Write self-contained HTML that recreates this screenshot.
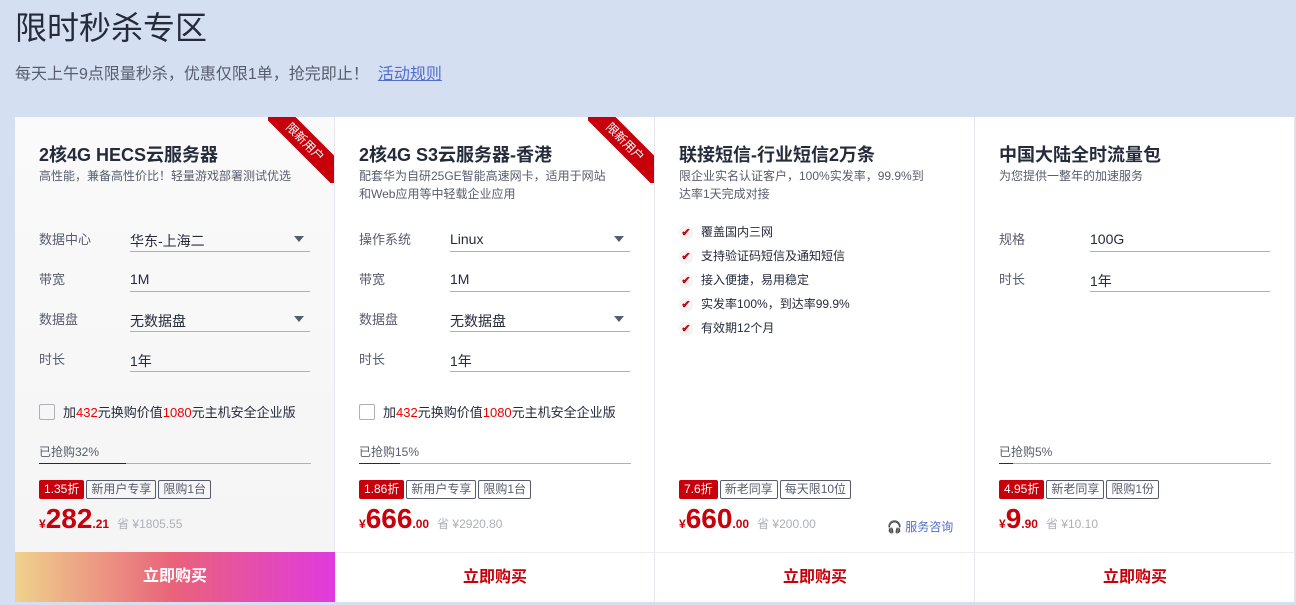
<!DOCTYPE html>
<html><head><meta charset="utf-8"><style>
*{margin:0;padding:0;box-sizing:border-box}
body{width:1296px;height:605px;background:#d4e0f1;font-family:"Liberation Sans","Noto Sans CJK SC",sans-serif;color:#252b3a;position:relative;overflow:hidden}
.a{position:absolute}
h1{position:absolute;left:15px;top:3px;font-size:32px;font-weight:normal;color:#252b3a}
.sub{left:15px;top:60px;font-size:16px;color:#575d6c}
.sub a{color:#526ecc;text-decoration:underline;margin-left:9px}
.card{position:absolute;top:117px;width:320px;height:485px;background:#fff;border-right:1px solid #e5e8ee}
.card .t{position:absolute;left:24px;top:24px;font-size:18px;font-weight:bold;color:#252b3a}
.card .d{position:absolute;left:24px;top:50px;font-size:12px;color:#575d6c;line-height:18px;width:250px}
.row{position:absolute;left:24px;width:271px;height:20px;font-size:13px}
.row .l{position:absolute;left:0;top:-2px;color:#575d6c}
.row .v{position:absolute;left:91px;top:0;width:180px;height:18px;border-bottom:1px solid #adb0b8;padding-bottom:20px;font-size:14px;color:#252b3a}
.tri{position:absolute;right:6px;top:5px;border:5px solid transparent;border-top:6px solid #575d6c}
.chk{position:absolute;left:24px;top:285px;font-size:13px;color:#252b3a}
.chk i{display:inline-block;width:16px;height:16px;border:1px solid #adb0b8;border-radius:2px;vertical-align:-3px;margin-right:8px}
.red{color:#e00}
.prog{position:absolute;left:24px;top:326px;font-size:12px;color:#575d6c}
.bar{position:absolute;left:24px;top:346px;width:272px;height:1px;background:#adb0b8}
.bar b{display:block;height:1px;background:#252b3a}
.tags{position:absolute;left:24px;top:363px;font-size:12px}
.tags span{display:inline-block;height:19px;line-height:17px;padding:0 4px;border:1px solid #575d6c;border-radius:2px;color:#575d6c;margin-right:2px}
.tags span.k{background:#c7000b;border-color:#c7000b;color:#fff}
.price{position:absolute;left:24px;top:386px;color:#c7000b;font-weight:bold;white-space:nowrap}
.price .y{font-size:12px}.price .n{font-size:28px}.price .c{font-size:12px}
.price .o{font-size:12px;color:#adb0b8;font-weight:normal;margin-left:8px}
.btn{position:absolute;left:0;top:435px;width:320px;height:50px;line-height:50px;text-align:center;font-size:16px;font-weight:bold;color:#c7000b;border-top:1px solid #eee}
.rib{position:absolute;right:0;top:0;width:66px;height:66px;overflow:hidden}
.rib div{position:absolute;right:-26px;top:14px;width:110px;height:22px;line-height:22px;background:#c7000b;color:#fff;font-size:12px;text-align:center;transform:rotate(45deg)}
.li{position:absolute;left:24px;font-size:12px;color:#252b3a}
.li i{display:inline-block;width:14px;height:14px;border-radius:50%;background:#f3f3f3;color:#c7000b;font-style:normal;font-size:11px;line-height:14px;text-align:center;margin-right:8px;font-weight:bold}
</style></head><body>
<h1>限时秒杀专区</h1>
<div class="a sub">每天上午9点限量秒杀，优惠仅限1单，抢完即止！<a>活动规则</a></div>

<div class="card" style="left:15px;background:linear-gradient(180deg,#fafafa,#f4f4f5)">
<div class="rib"><div>限新用户</div></div>
<div class="t">2核4G HECS云服务器</div>
<div class="d" style="width:280px;white-space:nowrap">高性能，兼备高性价比！轻量游戏部署测试优选</div>
<div class="row" style="top:114px"><span class="l">数据中心</span><div class="v">华东-上海二<span class="tri"></span></div></div>
<div class="row" style="top:154px"><span class="l">带宽</span><div class="v">1M</div></div>
<div class="row" style="top:194px"><span class="l">数据盘</span><div class="v">无数据盘<span class="tri"></span></div></div>
<div class="row" style="top:234px"><span class="l">时长</span><div class="v">1年</div></div>
<div class="chk"><i></i>加<span class="red">432</span>元换购价值<span class="red">1080</span>元主机安全企业版</div>
<div class="prog">已抢购32%</div><div class="bar"><b style="width:32%"></b></div>
<div class="tags"><span class="k">1.35折</span><span>新用户专享</span><span>限购1台</span></div>
<div class="price"><span class="y">¥</span><span class="n">282</span><span class="c">.21</span><span class="o">省 ¥1805.55</span></div>
<div class="btn" style="color:#fff;border:0;background:linear-gradient(90deg,#efd28c,#e9627a 50%,#e03adf)">立即购买</div>
</div>

<div class="card" style="left:335px">
<div class="rib"><div>限新用户</div></div>
<div class="t">2核4G S3云服务器-香港</div>
<div class="d">配套华为自研25GE智能高速网卡，适用于网站和Web应用等中轻载企业应用</div>
<div class="row" style="top:114px"><span class="l">操作系统</span><div class="v">Linux<span class="tri"></span></div></div>
<div class="row" style="top:154px"><span class="l">带宽</span><div class="v">1M</div></div>
<div class="row" style="top:194px"><span class="l">数据盘</span><div class="v">无数据盘<span class="tri"></span></div></div>
<div class="row" style="top:234px"><span class="l">时长</span><div class="v">1年</div></div>
<div class="chk"><i></i>加<span class="red">432</span>元换购价值<span class="red">1080</span>元主机安全企业版</div>
<div class="prog">已抢购15%</div><div class="bar"><b style="width:15%"></b></div>
<div class="tags"><span class="k">1.86折</span><span>新用户专享</span><span>限购1台</span></div>
<div class="price"><span class="y">¥</span><span class="n">666</span><span class="c">.00</span><span class="o">省 ¥2920.80</span></div>
<div class="btn">立即购买</div>
</div>

<div class="card" style="left:655px">
<div class="t">联接短信-行业短信2万条</div>
<div class="d">限企业实名认证客户，100%实发率，99.9%到达率1天完成对接</div>
<div class="li" style="top:106px"><i>✔</i>覆盖国内三网</div>
<div class="li" style="top:130px"><i>✔</i>支持验证码短信及通知短信</div>
<div class="li" style="top:154px"><i>✔</i>接入便捷，易用稳定</div>
<div class="li" style="top:178px"><i>✔</i>实发率100%，到达率99.9%</div>
<div class="li" style="top:202px"><i>✔</i>有效期12个月</div>
<div class="tags"><span class="k">7.6折</span><span>新老同享</span><span>每天限10位</span></div>
<div class="price"><span class="y">¥</span><span class="n">660</span><span class="c">.00</span><span class="o">省 ¥200.00</span></div>
<div class="a" style="left:232px;top:401px;font-size:12px;color:#526ecc">🎧 服务咨询</div>
<div class="btn">立即购买</div>
</div>

<div class="card" style="left:975px">
<div class="t">中国大陆全时流量包</div>
<div class="d">为您提供一整年的加速服务</div>
<div class="row" style="top:114px"><span class="l">规格</span><div class="v">100G</div></div>
<div class="row" style="top:154px"><span class="l">时长</span><div class="v">1年</div></div>
<div class="prog">已抢购5%</div><div class="bar"><b style="width:5%"></b></div>
<div class="tags"><span class="k">4.95折</span><span>新老同享</span><span>限购1份</span></div>
<div class="price"><span class="y">¥</span><span class="n">9</span><span class="c">.90</span><span class="o">省 ¥10.10</span></div>
<div class="btn">立即购买</div>
</div>
</body></html>
